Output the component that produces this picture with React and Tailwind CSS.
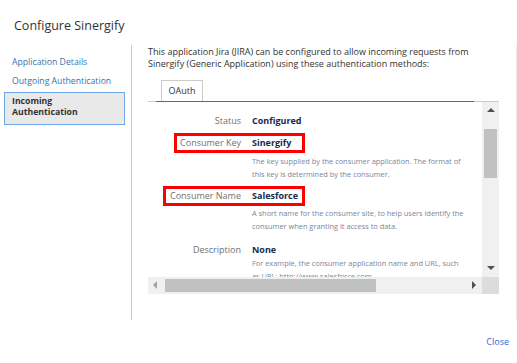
import React from "react";

const font = { fontFamily: '"Open Sans", "Noto Sans", sans-serif' };

const fields = [
  {
    label: "Status",
    value: "Configured",
  },
  {
    label: "Consumer Key",
    value: "Sinergify",
    boxed: "left-[26px] w-[131px]",
    descGap: "mt-[5.5px]",
    desc: ["The key supplied by the consumer application. The format of", "this key is determined by the consumer."],
  },
  {
    label: "Consumer Name",
    value: "Salesforce",
    boxed: "left-[15px] w-[142px]",
    descGap: "mt-[4px]",
    desc: ["A short name for the consumer site, to help users identify the", "consumer when granting it access to data."],
  },
  {
    label: "Description",
    value: "None",
    gap: "mt-[11px]",
    descGap: "mt-0",
    desc: ["For example, the consumer application name and URL, such", "as URL: http://www.salesforce.com"],
  },
];

function Field({ f, first }) {
  return (
    <div className={first ? "" : f.gap || "mt-[8px]"}>
      <div className="relative flex items-center h-[14px]">
        <div className="w-[93px] text-right text-[9px] text-[#707070] whitespace-nowrap">{f.label}</div>
        <div className="ml-[11px] text-[9px] font-bold text-[#172b4d]">{f.value}</div>
        {f.boxed && (
          <div className={`absolute top-[-3px] h-[20px] border-[3px] border-[#ff0000] ${f.boxed}`} />
        )}
      </div>
      {f.desc && (
        <div className={`ml-[104px] ${f.descGap} mb-[2.5px] text-[7.4px] leading-[12.7px] text-[#7a869a] whitespace-nowrap`}>
          {f.desc.map((d) => (
            <div key={d}>{d}</div>
          ))}
        </div>
      )}
    </div>
  );
}

export default function App() {
  return (
    <div className="w-[517px] h-[363px] bg-white overflow-hidden text-[#333]" style={font}>
      <div className="h-[45px] pl-[14px] pt-[16px] text-[12.5px] leading-[20px] text-[#333]">
        Configure Sinergify
      </div>

      <div className="flex h-[275px]">
        {/* left nav */}
        <div className="w-[132px] border-r border-[#cccccc] pt-[8px] pl-[4px] pr-[6px]">
          <div className="pl-[8px] h-[19px] leading-[19px] text-[8.7px] text-[#3572b0] whitespace-nowrap">Application Details</div>
          <div className="pl-[8px] h-[19px] leading-[19px] text-[8.7px] text-[#3572b0] whitespace-nowrap">Outgoing Authentication</div>
          <div className="mt-[1px] h-[33px] bg-[#e9e9e9] border border-[#6fa8e8] pl-[7px] pt-[3px] text-[8.7px] leading-[11px] font-bold text-[#333]">
            Incoming
            <br />
            Authentication
          </div>
        </div>

        {/* right content */}
        <div className="w-[385px] border-r border-[#ececec] pl-[16px] pr-[17px]">
          <p className="pt-[0.5px] text-[9px] leading-[12.7px] text-[#333] whitespace-nowrap">
            This application Jira (JIRA) can be configured to allow incoming requests from
            <br />
            Sinergify (Generic Application) using these authentication methods:
          </p>

          <div className="mt-[9px] pl-[13px] flex">
            <div className="w-[42px] h-[21px] border border-b-0 border-[#cccccc] bg-white text-[9px] leading-[20px] text-center text-[#333]">
              OAuth
            </div>
          </div>
          <div className="flex h-px">
            <div className="w-[8px] bg-[#cccccc]" />
            <div className="w-[318px] bg-[#3572b0]" />
            <div className="flex-1 bg-[#cccccc]" />
          </div>

          {/* scroll panel */}
          <div className="flex flex-col h-[192px]">
            <div className="flex flex-1 min-h-0">
              <div className="flex-1 overflow-hidden pt-[12px]">
                {fields.map((f, i) => (
                  <Field key={f.label} f={f} first={i === 0} />
                ))}
              </div>
              <div className="w-[17px] bg-[#f0f0f0] flex flex-col items-center">
                <div className="mt-[6px] w-0 h-0 border-x-[4px] border-x-transparent border-b-[4px] border-b-[#505050]" />
                <div className="mt-[17px] w-[13px] h-[49px] bg-[#c1c1c1]" />
                <div className="mt-auto mb-[7px] w-0 h-0 border-x-[4px] border-x-transparent border-t-[4px] border-t-[#505050]" />
              </div>
            </div>
            <div className="flex h-[17px]">
              <div className="flex-1 bg-[#f0f0f0] flex items-center">
                <div className="ml-[5px] w-0 h-0 border-y-[4px] border-y-transparent border-r-[4px] border-r-[#a3a3a3]" />
                <div className="ml-[8px] w-[211px] h-[13px] bg-[#c1c1c1]" />
                <div className="ml-auto mr-[6px] w-0 h-0 border-y-[4px] border-y-transparent border-l-[4px] border-l-[#505050]" />
              </div>
              <div className="w-[17px] bg-[#dcdcdc]" />
            </div>
          </div>
        </div>
      </div>

      <div className="flex justify-end pr-[8px] pt-[15px]">
        <span className="text-[9px] text-[#2d6ed8]">Close</span>
      </div>
    </div>
  );
}
